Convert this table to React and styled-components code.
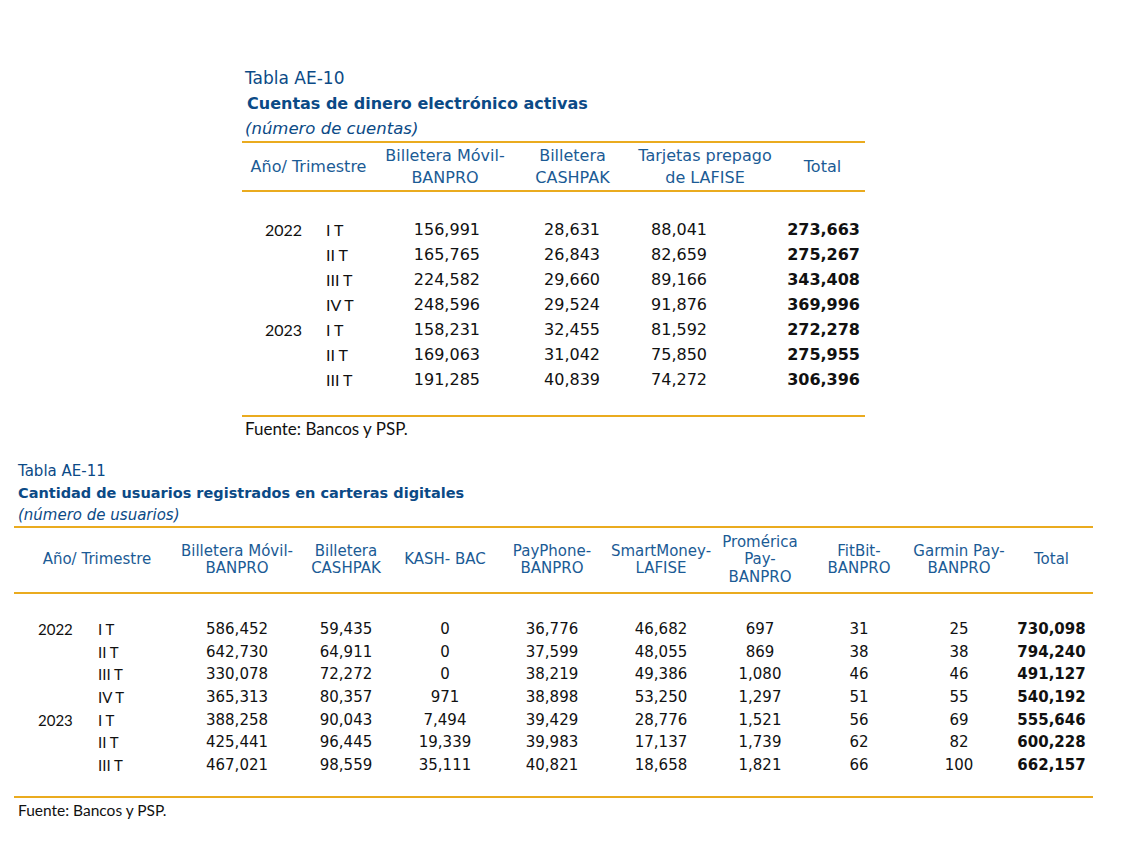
import React from 'react';
import styled, { createGlobalStyle } from 'styled-components';

const GlobalStyle = createGlobalStyle`
  html, body {
    margin: 0;
    padding: 0;
    background: #ffffff;
  }
  body {
    font-family: "DejaVu Sans", Verdana, sans-serif;
  }
`;

const GOLD = '#eaab1f';
const NAVY = '#0b4a86';
const HEAD_BLUE = '#1b5b95';

const Page = styled.div`
  width: 1122px;
  min-height: 844px;
  padding-top: 66px;
  box-sizing: border-box;
`;

const Block = styled.section`
  margin-left: ${(p) => p.$left}px;
  width: ${(p) => p.$width}px;
  margin-bottom: ${(p) => p.$gap || 0}px;
`;

const Caption = styled.div`
  color: ${NAVY};
  font-size: ${(p) => p.$size}px;
  line-height: ${(p) => p.$lh}px;
  padding-left: ${(p) => p.$indent || 0}px;
  font-weight: ${(p) => (p.$bold ? 700 : 400)};
  font-style: ${(p) => (p.$italic ? 'italic' : 'normal')};
  white-space: nowrap;
`;

const Grid = styled.div`
  display: grid;
  grid-template-columns: ${(p) => p.$cols};
  border-top: 2px solid ${GOLD};
  border-bottom: 2px solid ${GOLD};
`;

const HeadRow = styled.div`
  display: contents;
`;

const HeadCell = styled.div`
  grid-column: ${(p) => p.$span || 'auto'};
  height: ${(p) => p.$h}px;
  display: flex;
  align-items: center;
  justify-content: center;
  text-align: center;
  color: ${HEAD_BLUE};
  font-size: ${(p) => p.$size}px;
  line-height: ${(p) => p.$lh}px;
  border-bottom: 2px solid ${GOLD};
  white-space: pre-line;
`;

const Spacer = styled.div`
  grid-column: 1 / -1;
  height: ${(p) => p.$h}px;
`;

const Label = styled.div`
  font-family: Lato, "Open Sans", sans-serif;
  font-size: ${(p) => p.$size}px;
  line-height: ${(p) => p.$h}px;
  height: ${(p) => p.$h}px;
  padding-left: ${(p) => p.$pad}px;
  color: #111;
  white-space: nowrap;
`;

const Num = styled.div`
  font-size: ${(p) => p.$size}px;
  line-height: ${(p) => p.$h}px;
  height: ${(p) => p.$h}px;
  font-weight: ${(p) => (p.$bold ? 700 : 400)};
  text-align: ${(p) => (p.$align === 'right' ? 'right' : 'center')};
  padding-right: ${(p) => p.$pad || 0}px;
  color: #111;
  white-space: nowrap;
`;

const Source = styled.div`
  font-family: Lato, "Open Sans", sans-serif;
  font-size: ${(p) => p.$size}px;
  line-height: ${(p) => p.$lh}px;
  padding-top: ${(p) => p.$top || 0}px;
  padding-left: ${(p) => p.$indent}px;
  color: #111;
`;

const QUARTERS = ['I T', 'II T', 'III T', 'IV T', 'I T', 'II T', 'III T'];
const yearOf = (i) => (i === 0 ? '2022' : i === 4 ? '2023' : '');

const t1 = {
  cols: '75px 58px 140px 115px 150px 85px',
  heads: ['Billetera Móvil-\nBANPRO', 'Billetera\nCASHPAK', 'Tarjetas prepago\nde LAFISE', 'Total'],
  pads: [35, 30, 73, 5],
  rows: [
    ['156,991', '28,631', '88,041', '273,663'],
    ['165,765', '26,843', '82,659', '275,267'],
    ['224,582', '29,660', '89,166', '343,408'],
    ['248,596', '29,524', '91,876', '369,996'],
    ['158,231', '32,455', '81,592', '272,278'],
    ['169,063', '31,042', '75,850', '275,955'],
    ['191,285', '40,839', '74,272', '306,396'],
  ],
};

const t2 = {
  cols: '74px 92px 114px 104px 94px 120px 98px 100px 98px 102px 83px',
  heads: [
    'Billetera Móvil-\nBANPRO',
    'Billetera\nCASHPAK',
    'KASH- BAC',
    'PayPhone-\nBANPRO',
    'SmartMoney-\nLAFISE',
    'Promérica\nPay-\nBANPRO',
    'FitBit-\nBANPRO',
    'Garmin Pay-\nBANPRO',
    'Total',
  ],
  rows: [
    ['586,452', '59,435', '0', '36,776', '46,682', '697', '31', '25', '730,098'],
    ['642,730', '64,911', '0', '37,599', '48,055', '869', '38', '38', '794,240'],
    ['330,078', '72,272', '0', '38,219', '49,386', '1,080', '46', '46', '491,127'],
    ['365,313', '80,357', '971', '38,898', '53,250', '1,297', '51', '55', '540,192'],
    ['388,258', '90,043', '7,494', '39,429', '28,776', '1,521', '56', '69', '555,646'],
    ['425,441', '96,445', '19,339', '39,983', '17,137', '1,739', '62', '82', '600,228'],
    ['467,021', '98,559', '35,111', '40,821', '18,658', '1,821', '66', '100', '662,157'],
  ],
};

function AccountsTable() {
  const last = t1.heads.length - 1;
  return (
    <Block $left={242} $width={623} $gap={21}>
      <Caption $size={17} $lh={25} $indent={3}>Tabla AE-10</Caption>
      <Caption $size={16} $lh={25} $indent={5} $bold>Cuentas de dinero electrónico activas</Caption>
      <Caption $size={16.5} $lh={25} $indent={3} $italic>(número de cuentas)</Caption>
      <Grid $cols={t1.cols}>
        <HeadRow>
          <HeadCell $span="1 / 3" $h={47} $size={16} $lh={22}>Año/ Trimestre</HeadCell>
          {t1.heads.map((h) => (
            <HeadCell key={h} $h={47} $size={16} $lh={22}>{h}</HeadCell>
          ))}
        </HeadRow>
        <Spacer $h={25} />
        {t1.rows.map((r, i) => (
          <React.Fragment key={i}>
            <Label $size={16} $h={25} $pad={23}>{yearOf(i)}</Label>
            <Label $size={16} $h={25} $pad={9}>{QUARTERS[i]}</Label>
            {r.map((v, j) => (
              <Num key={j} $size={16} $h={25} $align="right" $pad={t1.pads[j]} $bold={j === last}>
                {v}
              </Num>
            ))}
          </React.Fragment>
        ))}
        <Spacer $h={23} />
      </Grid>
      <Source $size={17} $lh={20} $top={2} $indent={3}>Fuente: Bancos y PSP.</Source>
    </Block>
  );
}

function UsersTable() {
  const last = t2.heads.length - 1;
  return (
    <Block $left={14} $width={1079}>
      <Caption $size={15} $lh={22} $indent={4}>Tabla AE-11</Caption>
      <Caption $size={14.5} $lh={22} $indent={4} $bold>Cantidad de usuarios registrados en carteras digitales</Caption>
      <Caption $size={15} $lh={22} $indent={4} $italic>(número de usuarios)</Caption>
      <Grid $cols={t2.cols}>
        <HeadRow>
          <HeadCell $span="1 / 3" $h={64} $size={15} $lh={17.5}>Año/ Trimestre</HeadCell>
          {t2.heads.map((h) => (
            <HeadCell key={h} $h={64} $size={15} $lh={17.5}>{h}</HeadCell>
          ))}
        </HeadRow>
        <Spacer $h={24} />
        {t2.rows.map((r, i) => (
          <React.Fragment key={i}>
            <Label $size={15} $h={22.7} $pad={24}>{yearOf(i)}</Label>
            <Label $size={15} $h={22.7} $pad={10}>{QUARTERS[i]}</Label>
            {r.map((v, j) => (
              <Num key={j} $size={15} $h={22.7} $bold={j === last}>
                {v}
              </Num>
            ))}
          </React.Fragment>
        ))}
        <Spacer $h={19} />
      </Grid>
      <Source $size={15.5} $lh={24} $indent={4}>Fuente: Bancos y PSP.</Source>
    </Block>
  );
}

export default function App() {
  return (
    <>
      <GlobalStyle />
      <Page>
        <AccountsTable />
        <UsersTable />
      </Page>
    </>
  );
}
